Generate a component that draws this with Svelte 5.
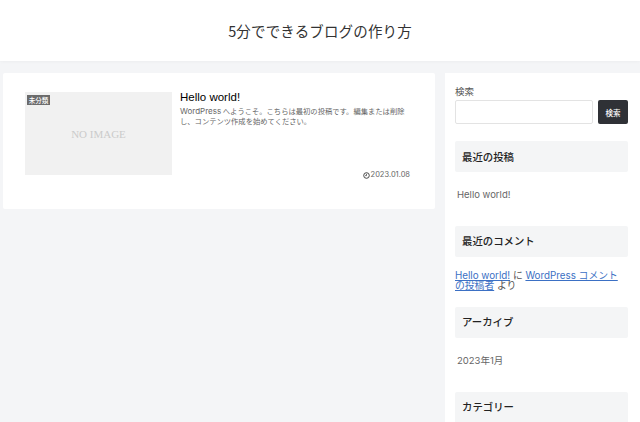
<script>
  const recent = ['Hello world!'];
</script>

<div class="page">
  <header class="header"><h1>5分でできるブログの作り方</h1></header>
  <div class="body">
    <main class="main">
      <article class="card">
        <div class="thumb">
          <span class="noimage">NO IMAGE</span>
          <span class="cat">未分類</span>
        </div>
        <div class="info">
          <h2>Hello world!</h2>
          <p><span class="wp">WordPress</span> へようこそ。こちらは最初の投稿です。編集または削除し、コンテンツ作成を始めてください。</p>
          <div class="date">
            <svg width="7" height="7" viewBox="0 0 10 10" aria-hidden="true"><circle cx="5" cy="5" r="4" fill="none" stroke="#444" stroke-width="1.4"/><path d="M5 2.6V5.2H3" fill="none" stroke="#444" stroke-width="1.1"/></svg>
            <span>2023.01.08</span>
          </div>
        </div>
      </article>
    </main>
    <aside class="side">
      <label class="search-label" for="s">検索</label>
      <div class="search">
        <input id="s" type="text" />
        <button>検索</button>
      </div>
      <h3 class="first">最近の投稿</h3>
      {#each recent as r}<div class="item item-post">{r}</div>{/each}
      <h3 class="h-comment">最近のコメント</h3>
      <div class="comment"><a href="#a">Hello world!</a> に <a href="#b">WordPress コメントの投稿者</a> より</div>
      <h3 class="h-archive">アーカイブ</h3>
      <div class="item item-archive">2023年1月</div>
      <h3 class="h-cat">カテゴリー</h3>
    </aside>
  </div>
</div>

<style>
  :global(body) {
    margin: 0;
    background: #f4f5f7;
    font-family: "Noto Sans CJK JP", "Inter", sans-serif;
    overflow: hidden;
  }
  .page { height: 422px; overflow: hidden; }
  .header {
    height: 61px;
    background: #fff;
    display: flex;
    align-items: center;
    justify-content: center;
    box-shadow: 0 1px 3px rgba(0,0,0,.03);
  }
  h1 {
    margin: 0;
    font-size: 14.5px;
    font-weight: 400;
    letter-spacing: .15px;
    color: #333;
  }
  .body {
    display: grid;
    grid-template-columns: 432px 195px;
    column-gap: 10px;
    padding: 12px 0 0 3px;
    align-items: start;
  }
  .card {
    background: #fff;
    border-radius: 2px;
    height: 136px;
    box-sizing: border-box;
    padding: 19px 25px 0 22px;
    display: flex;
    gap: 8px;
  }
  .thumb {
    position: relative;
    width: 147px;
    height: 83px;
    flex: none;
    background: #f1f1f1;
    display: flex;
    align-items: center;
    justify-content: center;
  }
  .noimage {
    font-family: "Liberation Serif", serif;
    font-size: 11px;
    padding-top: 1px;
    color: #cbcbcb;
  }
  .cat {
    position: absolute;
    left: 2px;
    top: 3px;
    height: 10px;
    width: 23px;
    background: #6b6b6b;
    color: #fff;
    font-size: 6.5px;
    font-weight: 500;
    line-height: 10px;
    text-align: center;
  }
  .info { flex: 1; display: flex; flex-direction: column; height: 88px; }
  h2 {
    margin: 0;
    font-family: "Liberation Sans", sans-serif;
    font-size: 11.5px;
    font-weight: 400;
    line-height: 11px;
    color: #000;
  }
  p {
    margin: 3px 0 0;
    font-size: 7.3px;
    line-height: 10px;
    color: #666;
  }
  .wp { font-family: "Inter", sans-serif; font-size: 8px; }
  .date {
    margin-top: auto;
    display: flex;
    align-items: center;
    justify-content: flex-end;
    gap: 1px;
    font-family: "Inter", sans-serif;
    font-size: 7.5px;
    line-height: 10px;
    color: #666;
  }
  .side {
    background: #fff;
    height: 360px;
    box-sizing: border-box;
    padding: 12px 12px 0 10px;
    font-size: 9.5px;
    color: #555;
  }
  .search-label { display: block; line-height: 12px; font-size: 9.5px; }
  .search { display: flex; gap: 5px; margin-top: 3px; }
  input {
    flex: 1;
    min-width: 0;
    height: 24px;
    box-sizing: border-box;
    border: 1px solid #e3e3e3;
    border-radius: 2px;
    background: #fff;
    padding: 0;
  }
  button {
    width: 30px;
    height: 24px;
    background: #2f3136;
    border: 0;
    border-radius: 2px;
    color: #fff;
    font-family: inherit;
    font-size: 7.5px;
    font-weight: 500;
    padding: 0;
  }
  h3 {
    margin: 0;
    height: 31px;
    background: #f4f5f6;
    border-radius: 2px;
    padding-left: 7px;
    font-size: 10.4px;
    font-weight: 500;
    line-height: 30px;
    color: #222;
  }
  .first { margin-top: 17px; line-height: 31px; }
  .item { padding-left: 2px; line-height: 14px; color: #666; font-family: "Inter", "Noto Sans CJK JP", sans-serif; font-size: 9.5px; }
  .item-post { margin-top: 16px; }
  .h-comment { margin-top: 24px; }
  .comment { margin-top: 14px; padding-right: 6px; line-height: 10px; font-size: 9.8px; font-family: "Inter", "Noto Sans CJK JP", sans-serif; color: #555; }
  .comment a { color: #3b70c4; }
  .h-archive { margin-top: 16px; }
  .item-archive { margin-top: 16px; }
  .h-cat { margin-top: 24px; }
</style>
